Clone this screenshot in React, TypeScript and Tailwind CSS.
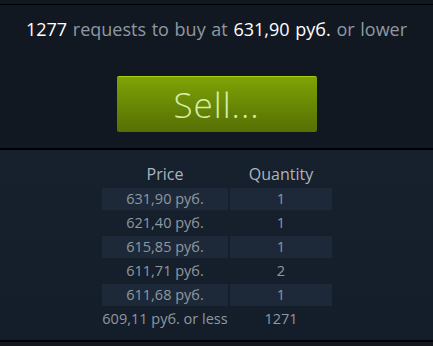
import React from 'react'

// Buy orders
const orders = [
	{ price: '631,90 руб.', qty: '1' },
	{ price: '621,40 руб.', qty: '1' },
	{ price: '615,85 руб.', qty: '1' },
	{ price: '611,71 руб.', qty: '2' },
	{ price: '611,68 руб.', qty: '1' },
]

const App: React.FC = () => {
	return (
		<div className="w-[433px] h-[346px] bg-[#121822] overflow-hidden font-['Open_Sans',Arial,sans-serif]">
			<div className="h-[4px]" />
			<div className="h-px bg-black" />

			{/* Header */}
			<div className="pt-[12px] text-center text-[18px] leading-[24px] text-[#8f98a0] whitespace-nowrap [word-spacing:1px]">
				<span className="text-white">1277</span> requests to buy at{' '}
				<span className="text-white">631,90 руб.</span> or lower
			</div>

			{/* Sell button */}
			<div className="flex justify-center pt-[35px]">
				<button className="w-[200px] h-[56px] rounded-[2px] border-t border-[#a4d007] bg-gradient-to-b from-[#7ea305] to-[#566f04] text-[#d2efa9] text-[35px] font-light leading-none tracking-[1px]">
					Sell...
				</button>
			</div>

			<div className="mt-[16px] h-[2px] bg-black" />

			{/* Order table */}
			<div className="h-[190px] bg-gradient-to-b from-[#17202d] to-[#141d2a] pt-[14px]">
				<div className="grid grid-cols-[126px_102px] gap-x-[2px] gap-y-[2px] w-[230px] ml-[102px] text-[14.5px] text-[#8f98a0]">
					<div className="text-center text-[16px] h-[21px] leading-[21px] mb-[1px] text-[#aab5bf]">Price</div>
					<div className="text-center text-[16px] h-[21px] leading-[21px] mb-[1px] text-[#aab5bf]">Quantity</div>
					{orders.map((o, i) => {
						const bg = i % 2 === 0 ? 'bg-[#1d2938]' : ''
						return (
							<React.Fragment key={i}>
								<div className={`h-[22px] leading-[22px] text-center ${bg}`}>{o.price}</div>
								<div className={`h-[22px] leading-[22px] text-center ${bg}`}>{o.qty}</div>
							</React.Fragment>
						)
					})}
					<div className="h-[22px] leading-[22px] text-center whitespace-nowrap">609,11 руб. or less</div>
					<div className="h-[22px] leading-[22px] text-center">1271</div>
				</div>
			</div>
			<div className="h-[2px] bg-black" />
		</div>
	)
}

export default App
